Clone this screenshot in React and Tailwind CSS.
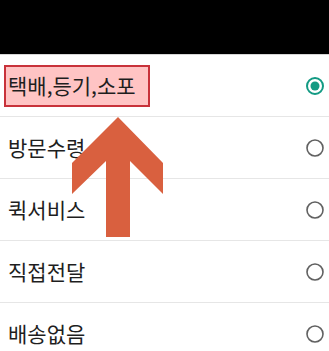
const options = ['택배,등기,소포', '방문수령', '퀵서비스', '직접전달', '배송없음'];

function Radio({ checked }) {
  return (
    <svg width="20" height="20" viewBox="0 0 20 20">
      {checked ? (
        <>
          <circle cx="10" cy="10" r="8" fill="none" stroke="#139a83" strokeWidth="2" />
          <circle cx="10" cy="10" r="4.5" fill="#139a83" />
        </>
      ) : (
        <circle cx="10" cy="10" r="8" fill="none" stroke="#616161" strokeWidth="1.6" />
      )}
    </svg>
  );
}

export default function App() {
  return (
    <div
      className="relative h-[351px] w-[329px] overflow-hidden bg-white"
      style={{ fontFamily: '"Noto Sans CJK KR", "Noto Sans", sans-serif' }}
    >
      <div className="h-[54px] bg-black" />
      <div className="h-px bg-[#d6d6d6]" />

      {options.map((label, i) => (
        <div
          key={label}
          className="flex h-[62px] items-center justify-between border-b border-[#e6e6e6] pl-[8px] pr-[4px]"
        >
          {i === 0 ? (
            <span className="relative text-[21px] leading-none text-[#1e1e1e]">
              <span className="absolute -left-[4px] -right-[14px] -top-[10px] -bottom-[11px] border-2 border-[#c8323a] bg-[#ffc4c4]" />
              <span className="relative">{label}</span>
            </span>
          ) : (
            <span className="text-[21px] leading-none text-[#1e1e1e]">{label}</span>
          )}
          <Radio checked={i === 0} />
        </div>
      ))}

      <svg className="absolute left-0 top-0" width="329" height="351" viewBox="0 0 329 351">
        <polygon
          points="118,117 163,163 163,194 130,161 130,237 106,237 106,161 72,194 72,163"
          fill="#d9603f"
        />
      </svg>
    </div>
  );
}
